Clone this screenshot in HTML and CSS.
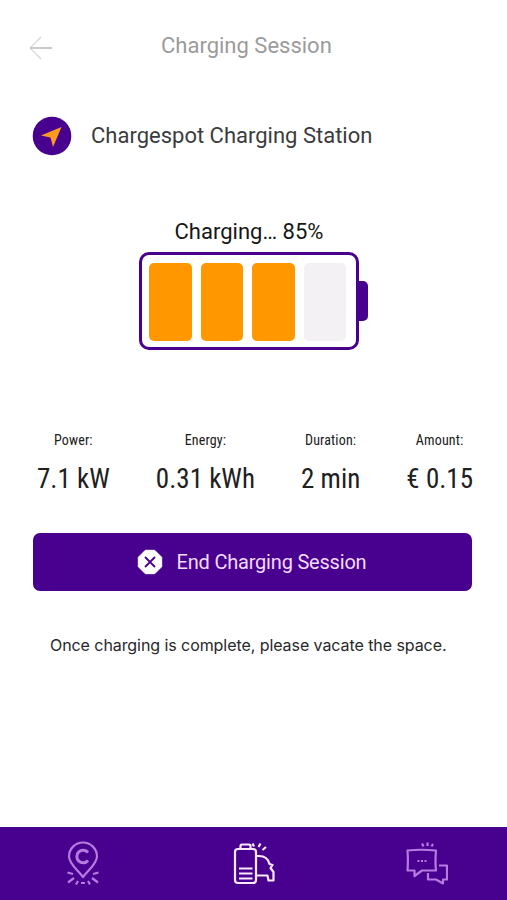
FILE: index.html
```html
<!DOCTYPE html>
<html lang="en">
<head>
<meta charset="utf-8">
<title>Charging Session</title>
<link rel="stylesheet" href="styles.css">
</head>
<body>
<div class="app">
  <header class="header">
    <svg class="back" width="24" height="26" viewBox="0 0 24 26"><path d="M12 2 1 13l11 11" stroke="#d6d6d6"/><path d="M1.500 13H23" stroke="#bdbdbd" stroke-width="1.600"/></svg>
    <h1 class="title">Charging Session</h1>
  </header>
  <section class="station">
    <svg width="40" height="40" viewBox="0 0 40 40"><circle cx="20" cy="20" r="19.300" fill="#48008f"/><path d="M29.500 11 9 19.500l9.500 2 2.500 9.500z" fill="#ff9a1f"/></svg>
    <h2 class="station-name">Chargespot Charging Station</h2>
  </section>
  <section class="charge">
    <p class="status">Charging… 85%</p>
    <div class="battery">
      <div class="shell">
        <span class="cell full"></span><span class="cell full"></span><span class="cell full"></span><span class="cell"></span>
      </div>
      <div class="terminal"></div>
    </div>
  </section>
  <section class="stats">
    <div class="stat"><span class="label">Power:</span><span class="value">7.1 kW</span></div>
    <div class="stat"><span class="label">Energy:</span><span class="value">0.31 kWh</span></div>
    <div class="stat"><span class="label">Duration:</span><span class="value">2 min</span></div>
    <div class="stat"><span class="label">Amount:</span><span class="value">€ 0.15</span></div>
  </section>
  <button class="end">
    <svg width="26" height="26" viewBox="0 0 26 26"><path d="M8.300 1.300h9.400l7 7v9.400l-7 7H8.300l-7-7V8.300z" fill="#fff" stroke="#fff" stroke-linejoin="round"/><path d="m8 8 10 10M18 8 8 18" stroke="#48008f" stroke-width="1.800"/></svg>
    <span class="end-text">End Charging Session</span>
  </button>
  <p class="note">Once charging is complete, please vacate the space.</p>
  <nav class="nav">
    <svg class="dim" width="36" height="46" viewBox="0 0 36 46"><path d="M18 36C13 29 4 23 4 15.500a14 14 0 0 1 28 0C32 23 23 29 18 36z"/><path d="M23 11.500a6.300 6.300 0 1 0 0 8" stroke-width="3"/><path d="m8 33-5.500-1.500M9 37l-6 4.500M13 40l-2 3.500M16 42h4M23 40l2 3.500M27 37l6 4.500M28 33l5.500-1.500"/></svg>
    <svg class="lit" width="42" height="46" viewBox="0 0 42 46"><rect x="2" y="8" width="21" height="34" rx="3"/><path d="M7.500 8V5q0-1.500 1.500-1.500h7q1.500 0 1.500 1.500v3M6 27.500h13.500M6 32.500h13.500M6 37.500h13.500M23 15h3c5 0 9 2 10.500 8l3 1-2 3 3 4v8.500h-5l-1-5H23M21 5.500 19.500 2.500M25.500 6l2-3.500M29.500 9l3.500-3"/></svg>
    <svg class="dim" width="42" height="46" viewBox="0 0 42 46"><path d="M1.500 9.500Q15 8 30 9.500q-1 11 0 20H16l-7.500 5.500v-5.500H1.500q.8-10 0-20zM33 24.500h8v14H37v4l-7-4h-8V32M17.500 5.500 16 2.500M21.500 5V1.500M25.500 5.500 27 3"/><path d="M11.500 20h9" stroke-dasharray="2 1.500"/></svg>
  </nav>
</div>
</body>
</html>
```

FILE: styles.css
```css
* { box-sizing: border-box; margin: 0; padding: 0; }
body { background: #fff; font-family: Roboto, sans-serif; }
h1, h2 { font-weight: 400; }
svg { display: block; flex: none; fill: none; }
.app { width: 507px; height: 900px; display: flex; flex-direction: column; overflow: hidden; }
.header { height: 92px; padding-left: 29px; display: flex; align-items: center; }
.back { margin-top: 3px; }
.title { margin-left: 108px; font-size: 22px; line-height: 26px; color: #9b9b9b; white-space: nowrap; }
.station { height: 88px; padding-left: 32px; display: flex; align-items: center; gap: 19px; }
.station-name { font-size: 22px; line-height: 26px; color: #3b3b3d; }
.charge { padding: 39px 0 0 139px; height: 249px; }
.status { width: 220px; text-align: center; font-size: 22px; line-height: 26px; color: #161616; }
.battery { display: flex; align-items: center; margin-top: 7px; }
.shell { width: 220px; height: 98px; border: 3.500px solid #48008f; border-radius: 10px; padding: 8px 7px; display: flex; gap: 9px; }
.cell { width: 42.500px; height: 78px; border-radius: 5px; background: #f3f1f3; }
.full { background: #ff9800; }
.terminal { width: 9px; height: 40px; border-radius: 0 5px 5px 0; background: #48008f; }
.stats { height: 104px; padding: 2px 34px 0 37px; display: flex; justify-content: space-between; }
.stat { display: flex; flex-direction: column; align-items: center; font-family: "Roboto Condensed", Roboto, sans-serif; font-stretch: 75%; color: #202020; }
.label { font-size: 14px; line-height: 18px; letter-spacing: .15px; }
.value { margin-top: 14px; font-size: 27px; line-height: 32px; white-space: nowrap; }
.end { width: 439px; height: 58px; margin-left: 33px; border: 0; border-radius: 7px; background: #48008f; display: flex; align-items: center; justify-content: center; gap: 14px; padding-right: 2px; }
.end-text { font: 20px/24px Roboto, sans-serif; letter-spacing: -.2px; color: #f4dcff; }
.note { margin: 43px 0 0 50px; font: 16px/22px Inter, sans-serif; letter-spacing: -.07px; color: #28282a; white-space: nowrap; }
.nav { margin-top: auto; height: 73px; background: #48008f; display: flex; justify-content: space-between; align-items: center; padding: 0 59px 0 65px; }
.nav svg { stroke-width: 2.200; stroke-linejoin: round; }
.back { stroke-width: 1.200; }
.dim { stroke: #b57be0; }
.lit { stroke: #fdeaff; }
```
